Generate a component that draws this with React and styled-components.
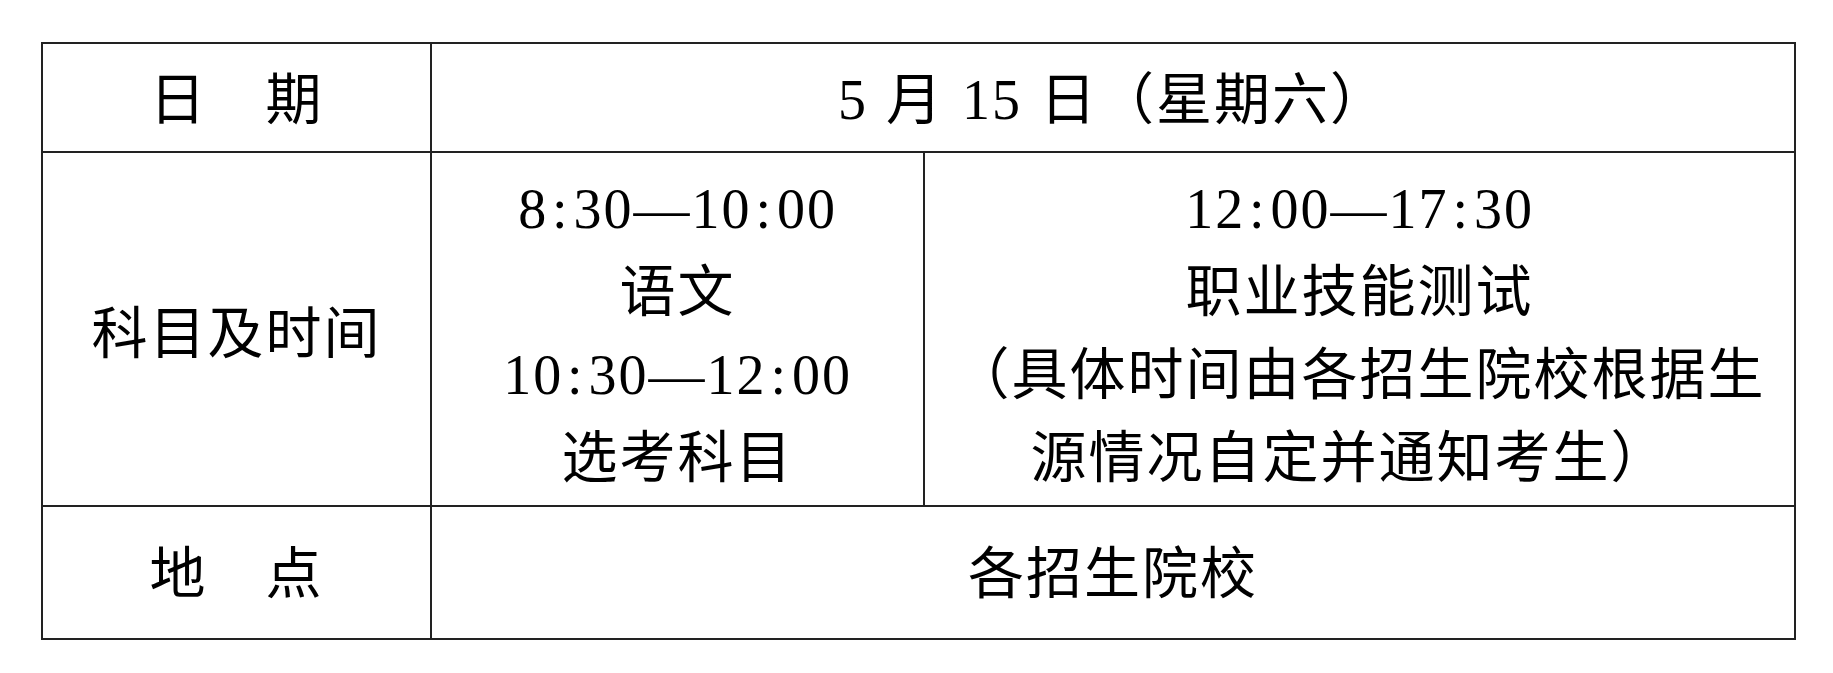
import React from "react";
import styled, { createGlobalStyle } from "styled-components";

const GlobalStyle = createGlobalStyle`
  html, body {
    margin: 0;
    padding: 0;
    background: #ffffff;
  }
  body {
    font-family: "Liberation Serif", "Noto Sans CJK SC", serif;
    color: #000000;
  }
`;

const Page = styled.div`
  padding: 42px 0 0 41px;
`;

const Schedule = styled.div`
  display: grid;
  grid-template-columns: 389px 493px 871px;
  grid-template-rows: 109px 354px 133px;
  width: fit-content;
  border-top: 2px solid #222222;
  border-left: 2px solid #222222;
`;

const Cell = styled.div`
  box-sizing: border-box;
  grid-column: span ${(p) => p.$span || 1};
  display: flex;
  flex-direction: column;
  align-items: center;
  justify-content: center;
  border-right: 2px solid #222222;
  border-bottom: 2px solid #222222;
  font-size: 56px;
  line-height: 83px;
  letter-spacing: 2px;
  text-align: center;
  padding-top: ${(p) => p.$shift || 0}px;
`;

const Label = styled.span`
  white-space: pre;
  word-spacing: ${(p) => p.$wordGap || 0}px;
`;

const Line = styled.span`
  display: block;
  white-space: nowrap;
  padding-right: ${(p) => p.$nudge || 0}px;
`;

const Colon = styled.span`
  margin: 0 0.07em;
`;

function Time({ children }) {
  const parts = children.split(":");
  return (
    <>
      {parts.map((p, i) => (
        <React.Fragment key={i}>
          {i > 0 && <Colon>:</Colon>}
          {p}
        </React.Fragment>
      ))}
    </>
  );
}

export default function App() {
  return (
    <>
      <GlobalStyle />
      <Page>
        <Schedule>
          <Cell $shift={6}>
            <Label>日　期</Label>
          </Cell>
          <Cell $span={2} $shift={6}>
            <Label $wordGap={2}>5 月 15 日（星期六）</Label>
          </Cell>

          <Cell $shift={10}>
            <Label>科目及时间</Label>
          </Cell>
          <Cell $shift={10}>
            <Line>
              <Time>8:30—10:00</Time>
            </Line>
            <Line>语文</Line>
            <Line>
              <Time>10:30—12:00</Time>
            </Line>
            <Line>选考科目</Line>
          </Cell>
          <Cell $shift={10}>
            <Line>
              <Time>12:00—17:30</Time>
            </Line>
            <Line>职业技能测试</Line>
            <Line>（具体时间由各招生院校根据生</Line>
            <Line $nudge={20}>源情况自定并通知考生）</Line>
          </Cell>

          <Cell $shift={4}>
            <Label>地　点</Label>
          </Cell>
          <Cell $span={2} $shift={4}>
            <Label>各招生院校</Label>
          </Cell>
        </Schedule>
      </Page>
    </>
  );
}
